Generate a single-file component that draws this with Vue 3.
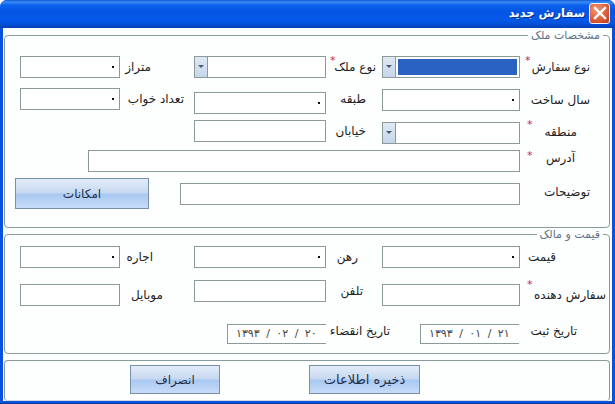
<script setup>
</script>

<template>
  <div class="window">
    <header class="titlebar">
      <span class="title">سفارش جدید</span>
      <button class="close" aria-label="بستن">
        <svg width="14" height="14" viewBox="0 0 14 14"><path d="M2 2 L12 12 M12 2 L2 12" stroke="#fff" stroke-width="2.4" stroke-linecap="square" fill="none"/></svg>
      </button>
    </header>

    <main class="client">
      <section class="group g1">
        <span class="legend l1">مشخصات ملک</span>
        <div class="row r1">
          <div class="box w-s"><i class="dot"></i></div>
          <span class="lab c-a pr43">متراز</span>
          <div class="box combo w-m"><b class="drop"></b></div>
          <span class="lab c-b pr6"><em class="star s1">*</em>نوع ملک</span>
          <div class="box combo w-l"><b class="drop"></b><span class="selected"></span></div>
          <span class="lab c-c tight"><em class="star s2">*</em>نوع سفارش</span>
        </div>
        <div class="row r2">
          <div class="box w-s"><i class="dot"></i></div>
          <span class="lab c-a pr10">تعداد خواب</span>
          <div class="box w-m mt4"><i class="dot"></i></div>
          <span class="lab c-b pr16">طبقه</span>
          <div class="box w-l mt1"><i class="dot"></i></div>
          <span class="lab c-c mt1">سال ساخت</span>
        </div>
        <div class="row r3">
          <div class="spacer"></div>
          <div class="box w-m"></div>
          <span class="lab c-b pr16">خیابان</span>
          <div class="box combo w-l mt2"><b class="drop"></b></div>
          <span class="lab c-c pr13 mt1"><em class="star s3">*</em>منطقه</span>
        </div>
        <div class="row r4">
          <div class="box w-addr"></div>
          <span class="lab c-c pr15 lift"><em class="star s5">*</em>آدرس</span>
        </div>
        <div class="row r5">
          <button class="btn btn-opts">امکانات</button>
          <div class="box w-desc"></div>
          <span class="lab c-c mt3">توضیحات</span>
        </div>
      </section>

      <section class="group g2">
        <span class="legend l2">قیمت و مالک</span>
        <div class="row r6">
          <div class="box w-s"><i class="dot"></i></div>
          <span class="lab c-a pr41">اجاره</span>
          <div class="box w-m"><i class="dot"></i></div>
          <span class="lab c-b pr24">رهن</span>
          <div class="box w-l"><i class="dot"></i></div>
          <span class="lab c-c pr34">قیمت</span>
        </div>
        <div class="row r7">
          <div class="box w-s mt4"></div>
          <span class="lab c-a pr31 mt4">موبایل</span>
          <div class="box w-m"></div>
          <span class="lab c-b pr19">تلفن</span>
          <div class="box w-l mt4"></div>
          <span class="lab c-c wide mt4"><em class="star s4">*</em>سفارش دهنده</span>
        </div>
        <div class="row r8">
          <div class="date">۱۳۹۳ / ۰۲ / ۲۰</div>
          <span class="lab c-d pr30 up">تاریخ انقضاء</span>
          <div class="date">۱۳۹۳ / ۰۱ / ۲۱</div>
          <span class="lab c-c pr12 up">تاریخ ثبت</span>
        </div>
      </section>

      <footer class="group g3">
        <button class="btn btn-cancel">انصراف</button>
        <button class="btn btn-save">ذخیره اطلاعات</button>
      </footer>
    </main>
  </div>
</template>

<style>
html, body { margin: 0; padding: 0; background: #fff; }
</style>

<style scoped>
* { box-sizing: border-box; }
.window {
  width: 615px;
  height: 404px;
  display: flex;
  flex-direction: column;
  overflow: hidden;
  border-radius: 7px 7px 0 0;
  background: #0a52dc;
  padding: 0 3px 4px;
  border-bottom: 1px solid #0a3a9c;
  font-family: "DejaVu Sans", sans-serif;
  font-size: 12px;
  color: #222;
}
.titlebar {
  height: 28px;
  flex: none;
  margin: 0 -3px;
  padding: 0 5px 2px 0;
  display: flex;
  align-items: center;
  justify-content: flex-end;
  gap: 4px;
  background: linear-gradient(to bottom, #0a5ad6 0, #3f8cf3 2px, #0a62ee 5px, #0454e4 12px, #0558ea 20px, #0450d8 24px, #033fb4 28px);
}
.title {
  color: #fff;
  font-size: 11.5px;
  font-weight: 700;
  direction: rtl;
  text-shadow: 1px 1px 0 #0a2f8c;
}
.close {
  width: 21px;
  height: 21px;
  padding: 0;
  border: 1px solid #eef2fa;
  border-radius: 3px;
  background: radial-gradient(circle at 35% 30%, #f09a7c, #dc5f3a 55%, #b8381c);
  display: flex;
  align-items: center;
  justify-content: center;
}
.client {
  flex: 1;
  background: #fdfefe;
  padding: 7px 2px 0 1px;
  display: flex;
  flex-direction: column;
  gap: 6px;
}
.group {
  position: relative;
  border: 1px solid #8b9a9a;
  border-radius: 4px;
  padding: 20px 0 0 15px;
}
.g1 { height: 193px; }
.g2 { height: 120px; padding-top: 11px; }
.g3 { height: 41px; padding: 4px 0 0 125px; border-bottom-color: #cfd8e4; display: flex; gap: 89px; align-items: flex-start; }
.legend {
  position: absolute;
  top: -6px;
  background: #fdfefe;
  padding: 0 3px;
  direction: rtl;
  font-size: 11px;
  line-height: 12px;
  color: #5f7486;
  white-space: nowrap;
}
.l1 { right: 6px; }
.l2 { right: 6px; }
.row {
  display: flex;
  align-items: flex-start;
}
.r2 { margin-top: 10px; }
.r3 { margin-top: 6px; }
.r4 { margin-top: 6px; }
.r5 { margin-top: 6px; margin-left: -5px; }
.r7 { margin-top: 12px; }
.r8 { margin-top: 18px; margin-left: 207px; }
.box {
  position: relative;
  height: 22px;
  flex: none;
  border: 1px solid #8b9a9a;
  background: #fff;
}
.w-s { width: 100px; }
.w-m { width: 132px; }
.w-l { width: 138px; }
.w-addr { width: 432px; margin-left: 68px; }
.w-desc { width: 340px; margin-top: 5px; margin-left: 31px; }
.spacer { width: 174px; flex: none; }
.mt1 { margin-top: 1px; }
.mt2 { margin-top: 2px; }
.mt3 { margin-top: 3px; }
.mt4 { margin-top: 4px; }
.lift { margin-top: -3px; }
.dot {
  position: absolute;
  right: 5px;
  top: 9px;
  width: 2px;
  height: 2px;
  background: #111;
}
.combo { display: flex; align-items: stretch; }
.drop {
  position: relative;
  width: 13px;
  flex: none;
  background: linear-gradient(to bottom, #dfe8f4, #c6d6ec);
  border-right: 1px solid #8b9a9a;
}
.drop::after {
  content: "";
  position: absolute;
  left: 3px;
  top: 8px;
  border: 3px solid transparent;
  border-top: 3px solid #4a5a6c;
  border-bottom: 0;
}
.selected {
  flex: 1;
  margin: 2px;
  background: #2a62c4;
}
.lab {
  position: relative;
  flex: none;
  direction: rtl;
  text-align: right;
  height: 22px;
  line-height: 22px;
  white-space: nowrap;
}
.tight { font-size: 11.5px; }
.c-a { width: 74px; }
.c-b { width: 56px; }
.c-c { width: 70px; }
.c-d { width: 94px; }
.wide { width: 86px; }
.pr6 { padding-right: 6px; }
.pr10 { padding-right: 10px; }
.pr12 { padding-right: 12px; }
.pr13 { padding-right: 13px; }
.pr15 { padding-right: 15px; }
.pr16 { padding-right: 16px; }
.pr19 { padding-right: 19px; }
.pr24 { padding-right: 24px; }
.pr30 { padding-right: 30px; }
.pr31 { padding-right: 31px; }
.pr34 { padding-right: 34px; }
.pr41 { padding-right: 41px; }
.pr43 { padding-right: 43px; }
.up { height: 20px; line-height: 15px; }
.star {
  position: absolute;
  font-style: normal;
  font-size: 11px;
  line-height: 12px;
  color: #c03048;
}
.s1 { left: 4px; top: -1px; }
.s2 { left: 5px; top: -1px; }
.s3 { left: 7px; top: -2px; }
.s4 { left: 7px; top: -5px; }
.s5 { left: 7px; top: 3px; }
.date {
  width: 99px;
  height: 20px;
  flex: none;
  border: 1px solid #8b9a9a;
  border-right: 0;
  background: #fff;
  direction: ltr;
  text-align: left;
  padding-left: 8px;
  line-height: 18px;
  font-size: 11px;
  color: #444;
  white-space: pre;
  word-spacing: 3px;
}
.btn {
  font-family: inherit;
  font-size: 12px;
  color: #23304a;
  border: 1px solid #7890a8;
  padding: 0;
  background: linear-gradient(to bottom, #e2ecf8 0, #c6d8f0 48%, #a8c8f2 52%, #c8dcf8 100%);
  direction: rtl;
  flex: none;
}
.btn-opts { width: 134px; height: 31px; }
.btn-cancel { width: 90px; height: 29px; }
.btn-save { width: 111px; height: 29px; font-size: 13px; }
</style>
